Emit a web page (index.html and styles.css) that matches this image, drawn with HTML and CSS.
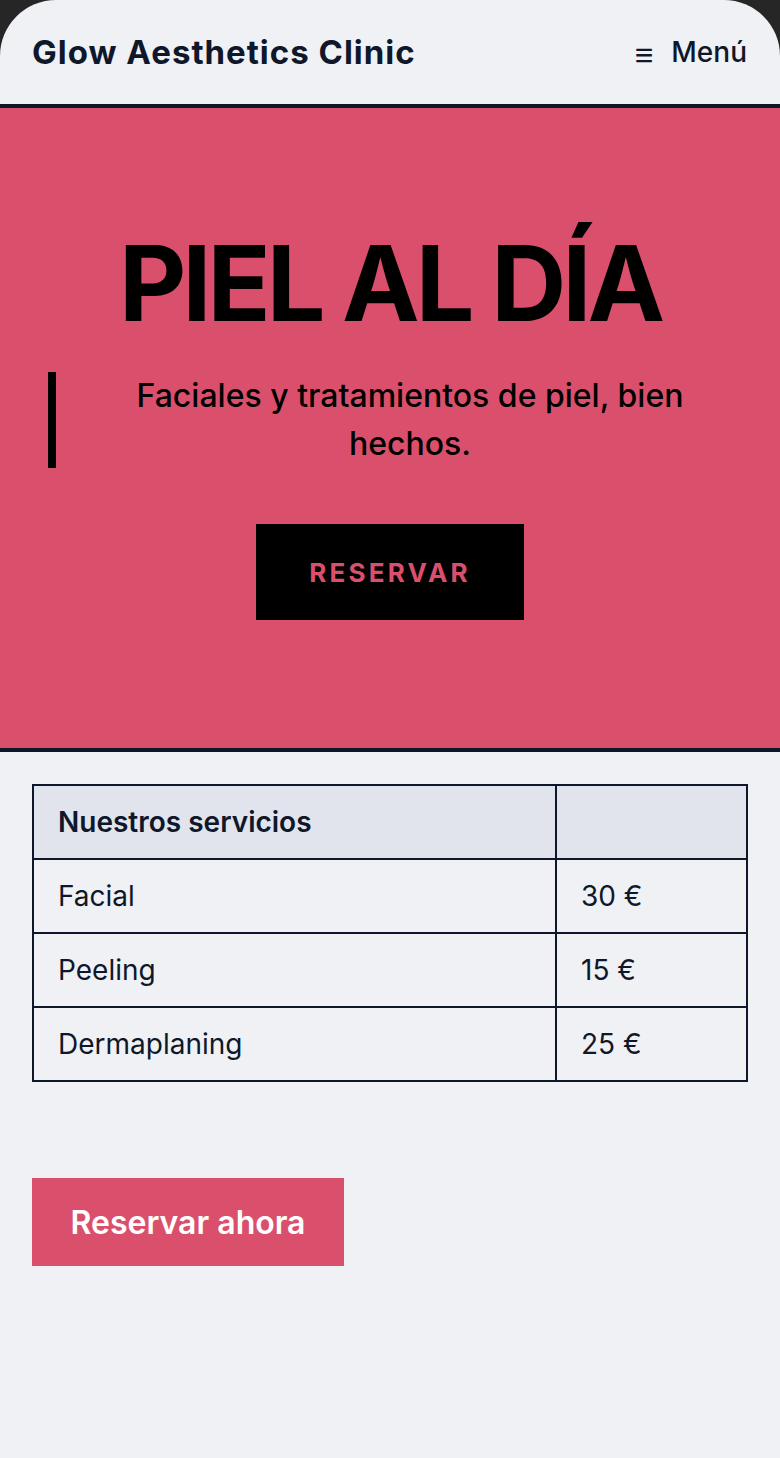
FILE: index.html
```html
<!DOCTYPE html>
<html lang="es">
<head>
<meta charset="utf-8">
<title>Glow Aesthetics Clinic</title>
<link rel="stylesheet" href="styles.css">
</head>
<body>
<div class="page">
  <header class="site-header">
    <div class="brand">Glow Aesthetics Clinic</div>
    <button class="menu-btn"><span class="menu-icon">≡</span><span>Menú</span></button>
  </header>
  <section class="hero">
    <h1 class="hero-title">PIEL AL DÍA</h1>
    <p class="hero-quote">Faciales y tratamientos de piel, bien hechos.</p>
    <a class="hero-btn" href="#">RESERVAR</a>
  </section>
  <main class="content">
    <table class="services">
      <thead>
        <tr><th>Nuestros servicios</th><th></th></tr>
      </thead>
      <tbody>
        <tr><td>Facial</td><td>30 €</td></tr>
        <tr><td>Peeling</td><td>15 €</td></tr>
        <tr><td>Dermaplaning</td><td>25 €</td></tr>
      </tbody>
    </table>
    <a class="cta" href="#">Reservar ahora</a>
  </main>
</div>
</body>
</html>
```
FILE: styles.css
```css
* { box-sizing: border-box; }
html, body { margin: 0; padding: 0; }
body {
  background: #262626;
  font-family: Inter, "Noto Sans", sans-serif;
  color: #0f172a;
}
.page {
  background: #eff1f5;
  min-height: 1458px;
  border-radius: 56px 56px 0 0;
  overflow: hidden;
}
.site-header {
  height: 108px;
  border-bottom: 4px solid #0f172a;
  display: flex;
  align-items: center;
  justify-content: space-between;
  padding: 0 33px 0 32px;
}
.brand {
  font-size: 33px;
  font-weight: 700;
  letter-spacing: 1px;
  color: #0f172a;
}
.menu-btn {
  background: none;
  border: 0;
  padding: 0;
  display: flex;
  align-items: center;
  gap: 18px;
  font-family: inherit;
  font-size: 28px;
  font-weight: 500;
  color: #0f172a;
}
.menu-icon {
  font-size: 32px;
  font-weight: 700;
  position: relative;
  top: 2px;
}
.hero {
  background: #da506c;
  border-bottom: 4px solid #0f172a;
  height: 644px;
  display: flex;
  flex-direction: column;
  align-items: center;
  padding-top: 120px;
}
.hero-title {
  margin: 0;
  font-size: 104px;
  font-weight: 700;
  letter-spacing: -4px;
  line-height: 110px;
  color: #000;
}
.hero-quote {
  align-self: stretch;
  margin: 34px 16px 0 48px;
  border-left: 8px solid #000;
  padding: 0 60px;
  text-align: center;
  font-size: 32px;
  font-weight: 500;
  line-height: 48px;
  color: #000;
}
.hero-btn {
  margin-top: 56px;
  width: 268px;
  height: 96px;
  background: #000;
  color: #da506c;
  text-decoration: none;
  display: flex;
  align-items: center;
  justify-content: center;
  font-size: 26px;
  font-weight: 700;
  letter-spacing: 3.2px;
}
.content {
  padding: 32px 32px 0;
}
.services {
  width: 716px;
  border-collapse: collapse;
  font-size: 28px;
  color: #0f172a;
}
.services th, .services td {
  border: 2px solid #0f172a;
  height: 74px;
  padding: 0 24px;
  text-align: left;
}
.services th {
  background: #e1e4ed;
  font-weight: 600;
}
.services th:first-child, .services td:first-child { width: 523px; }
.cta {
  margin-top: 96px;
  display: inline-flex;
  align-items: center;
  justify-content: center;
  width: 312px;
  height: 88px;
  background: #da506c;
  color: #fff;
  text-decoration: none;
  font-size: 32px;
  font-weight: 600;
}
```
